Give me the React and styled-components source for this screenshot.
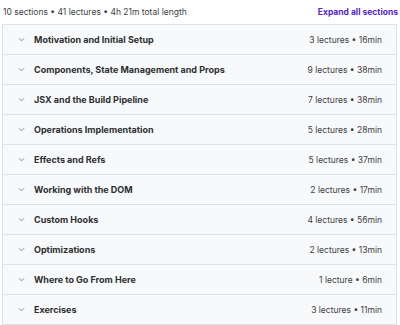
import React from 'react';
import styled, { createGlobalStyle } from 'styled-components';

const GlobalStyle = createGlobalStyle`
  body {
    margin: 0;
    background: #ffffff;
    font-family: Inter, "Noto Sans", sans-serif;
    color: #2d2f31;
  }
`;

const sections = [
  { title: 'Motivation and Initial Setup', lectures: 3, length: '16min' },
  { title: 'Components, State Management and Props', lectures: 9, length: '38min' },
  { title: 'JSX and the Build Pipeline', lectures: 7, length: '38min' },
  { title: 'Operations Implementation', lectures: 5, length: '28min' },
  { title: 'Effects and Refs', lectures: 5, length: '37min' },
  { title: 'Working with the DOM', lectures: 2, length: '17min' },
  { title: 'Custom Hooks', lectures: 4, length: '56min' },
  { title: 'Optimizations', lectures: 2, length: '13min' },
  { title: 'Where to Go From Here', lectures: 1, length: '6min' },
  { title: 'Exercises', lectures: 3, length: '11min' },
];

const Wrapper = styled.div`
  width: 400px;
  padding: 0 2px;
  box-sizing: border-box;
`;

const Summary = styled.div`
  display: flex;
  justify-content: space-between;
  align-items: center;
  height: 23px;
  padding-left: 1px;
  padding-bottom: 1px;
`;

const SummaryText = styled.span`
  font-size: 8.5px;
  color: #3e4143;
`;

const ExpandLink = styled.button`
  border: 0;
  background: none;
  padding: 0;
  font-family: inherit;
  font-size: 8.5px;
  font-weight: 700;
  color: #5624d0;
  cursor: pointer;
`;

const Panel = styled.div`
  border: 1px solid #dfe3e6;
  border-bottom: 0;
  margin-right: 1px;
`;

const Row = styled.div`
  display: flex;
  align-items: center;
  height: 29px;
  padding: 0 14px 0 15px;
  background: #f7f9fa;
  border-bottom: 1px solid #dfe3e6;
`;

const Chevron = styled.svg`
  width: 7px;
  height: 7px;
  margin-right: 9px;
  flex-shrink: 0;
`;

const Title = styled.span`
  flex: 1;
  font-size: 9px;
  font-weight: 700;
  color: #2d2f31;
`;

const Meta = styled.span`
  font-size: 8.5px;
  color: #3e4143;
`;

export default function App() {
  return (
    <Wrapper>
      <GlobalStyle />
      <Summary>
        <SummaryText>10 sections • 41 lectures • 4h 21m total length</SummaryText>
        <ExpandLink type="button">Expand all sections</ExpandLink>
      </Summary>
      <Panel>
        {sections.map((s) => (
          <Row key={s.title}>
            <Chevron viewBox="0 0 8 8" fill="none">
              <path d="M1.5 3 L4 5.5 L6.5 3" stroke="#6a6f73" strokeWidth="0.9" strokeLinecap="round" strokeLinejoin="round" />
            </Chevron>
            <Title>{s.title}</Title>
            <Meta>
              {`${s.lectures} ${s.lectures === 1 ? 'lecture' : 'lectures'} • ${s.length}`}
            </Meta>
          </Row>
        ))}
      </Panel>
    </Wrapper>
  );
}
